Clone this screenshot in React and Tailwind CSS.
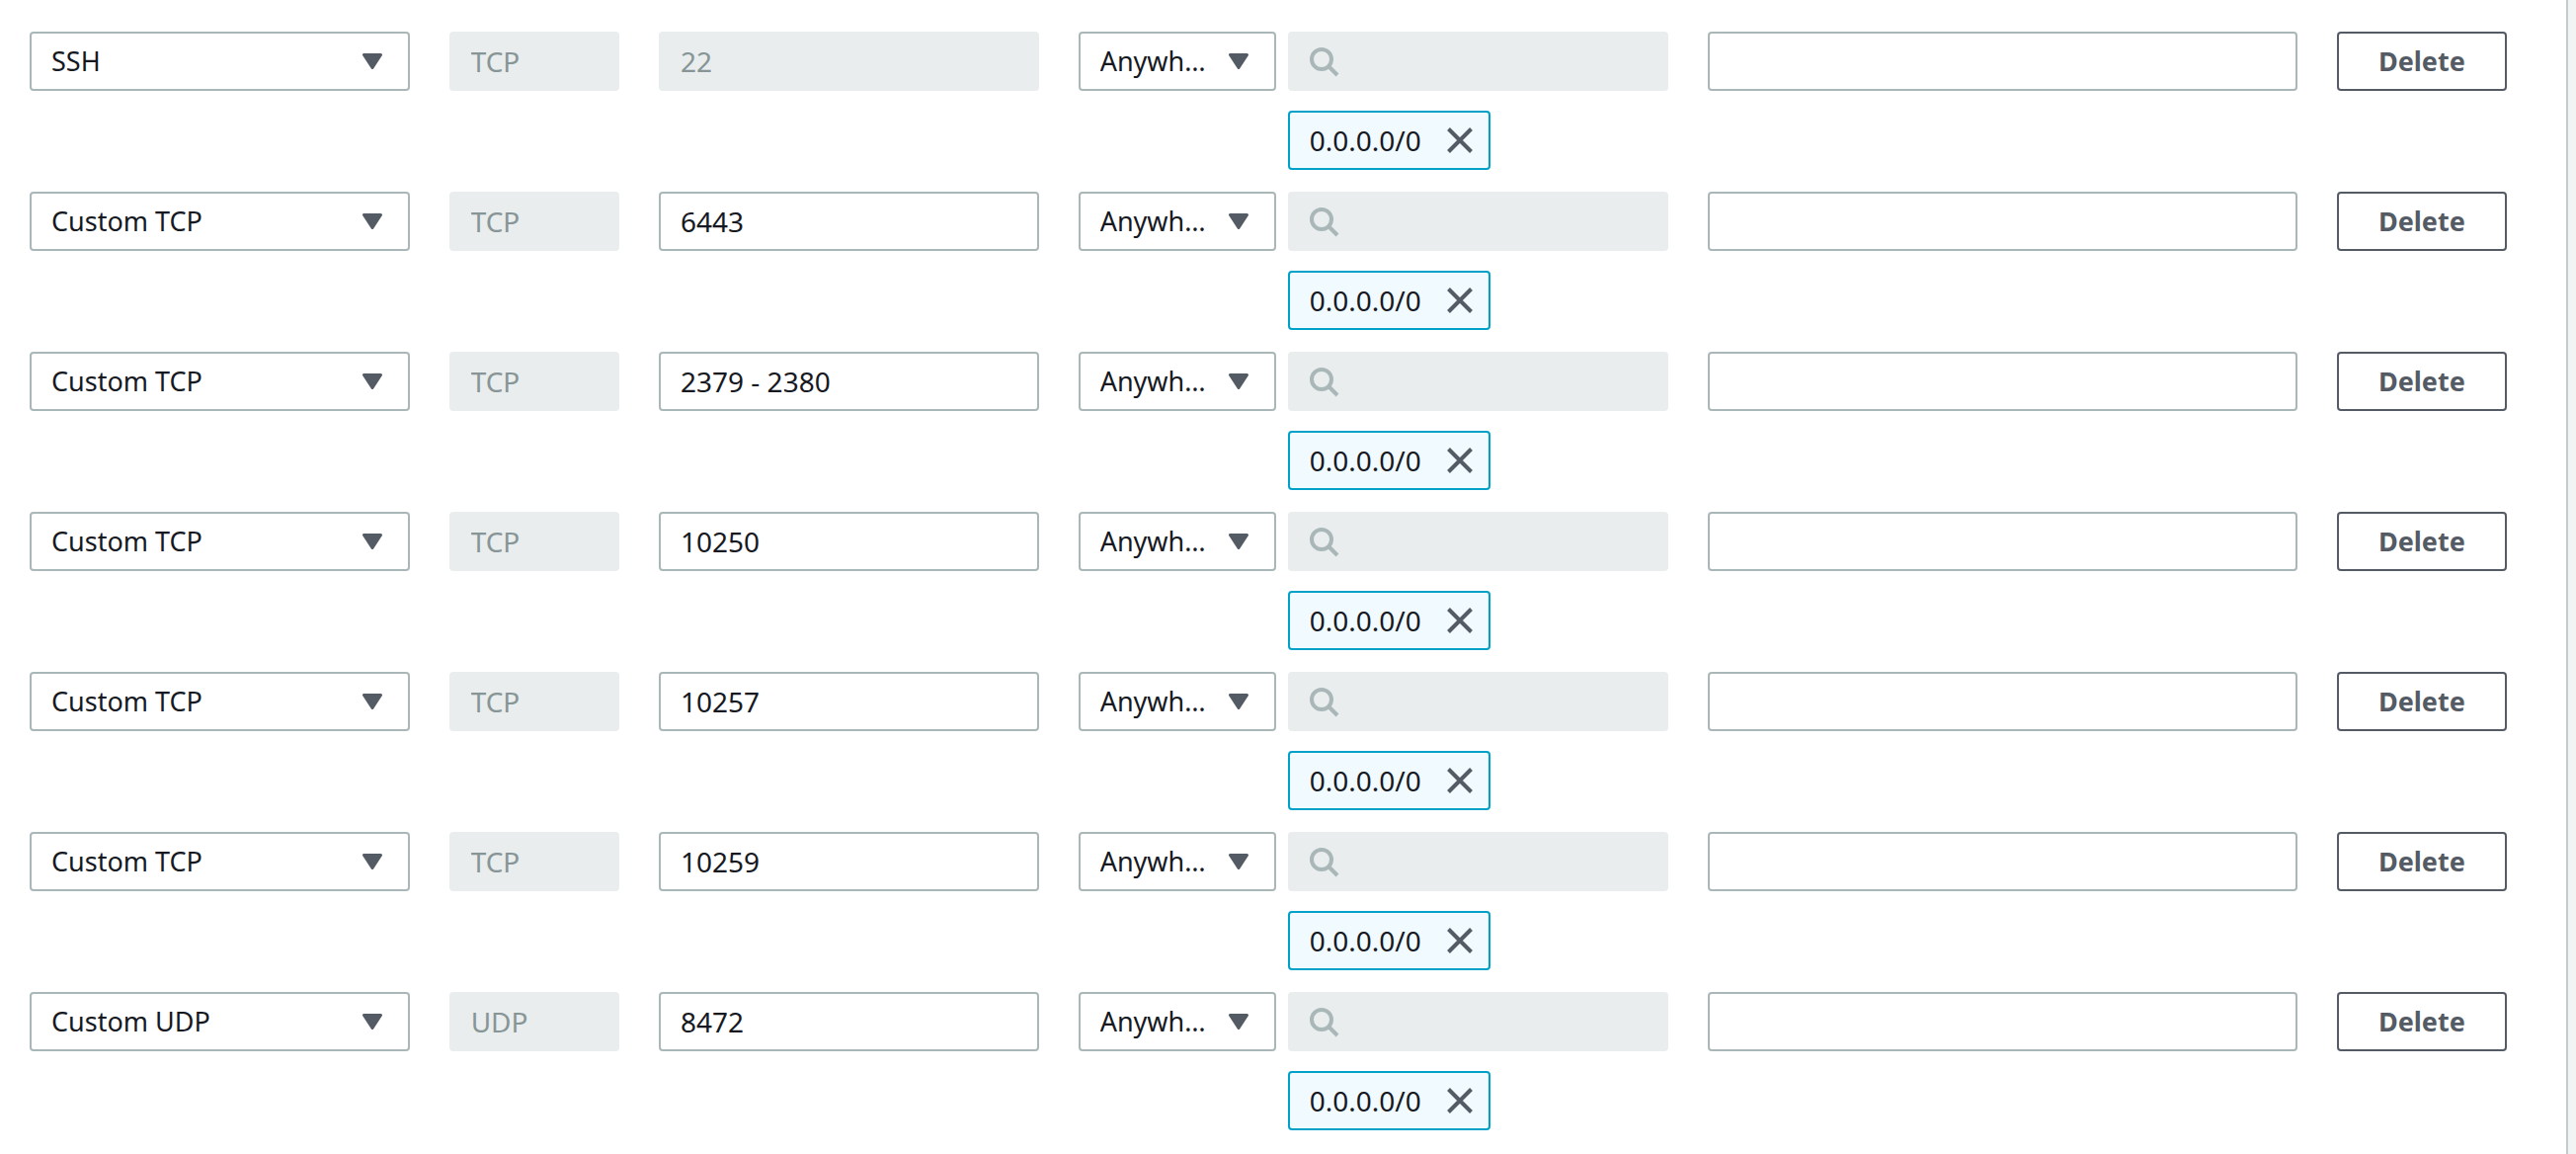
import React from "react";

const rules = [
  { type: "SSH", protocol: "TCP", port: "22", locked: true },
  { type: "Custom TCP", protocol: "TCP", port: "6443" },
  { type: "Custom TCP", protocol: "TCP", port: "2379 - 2380" },
  { type: "Custom TCP", protocol: "TCP", port: "10250" },
  { type: "Custom TCP", protocol: "TCP", port: "10257" },
  { type: "Custom TCP", protocol: "TCP", port: "10259" },
  { type: "Custom UDP", protocol: "UDP", port: "8472" },
];

const field =
  "block h-15 w-full min-w-0 rounded border-2 border-[#aab7b8] bg-white px-5 text-[28px] text-[#16191f] disabled:border-[#e9eded] disabled:bg-[#e9eded] disabled:text-[#879596]";

function Select({ label, value, options }) {
  return (
    <div className="relative min-w-0">
      <select
        aria-label={label}
        defaultValue={value}
        className="block h-15 w-full appearance-none truncate rounded border-2 border-[#aab7b8] bg-white pr-14 pl-5 text-[27px] text-[#16191f]"
      >
        {options.map((o) => (
          <option key={o}>{o}</option>
        ))}
      </select>
      <svg
        viewBox="0 0 20 16"
        aria-hidden="true"
        className="pointer-events-none absolute top-[22px] right-7 h-4 w-5 text-[#545b64]"
      >
        <path
          d="M1.5 1.5h17L10 14.5z"
          fill="currentColor"
          stroke="currentColor"
          strokeWidth="3"
          strokeLinejoin="round"
        />
      </svg>
    </div>
  );
}

function SearchIcon() {
  return (
    <svg
      viewBox="0 0 30 30"
      aria-hidden="true"
      className="pointer-events-none absolute top-4 left-[22px] size-[30px] text-[#aab7b8]"
      fill="none"
      stroke="currentColor"
      strokeWidth="4"
    >
      <circle cx="12" cy="12" r="10" />
      <path d="M19 19l9 9" />
    </svg>
  );
}

function Rule({ rule, index }) {
  const n = index + 1;
  return (
    <div className="grid grid-cols-12 items-start gap-x-10">
      <div className="col-span-2">
        <Select
          label={`Type, rule ${n}`}
          value={rule.type}
          options={["SSH", "Custom TCP", "Custom UDP"]}
        />
      </div>
      <input
        aria-label={`Protocol, rule ${n}`}
        className={field}
        defaultValue={rule.protocol}
        disabled
      />
      <div className="col-span-2">
        <input
          aria-label={`Port range, rule ${n}`}
          className={field}
          defaultValue={rule.port}
          disabled={rule.locked}
        />
      </div>
      <div className="col-span-3 grid grid-cols-[200fr_385fr] gap-x-3 gap-y-5">
        <Select
          label={`Source type, rule ${n}`}
          value="Anywhere"
          options={["Custom", "Anywhere", "My IP"]}
        />
        <div className="relative">
          <input aria-label={`Source, rule ${n}`} type="search" className={field} disabled />
          <SearchIcon />
        </div>
        <div className="col-start-2 flex h-15 items-center gap-[26px] justify-self-start rounded border-2 border-[#00a1c9] bg-[#f1faff] pr-4 pl-5 text-[28px] text-[#16191f]">
          <span>0.0.0.0/0</span>
          <button type="button" aria-label="Remove 0.0.0.0/0" className="text-[#545b64]">
            <svg
              viewBox="0 0 26 26"
              aria-hidden="true"
              className="size-[26px]"
              fill="none"
              stroke="currentColor"
              strokeWidth="4"
            >
              <path d="M1.5 1.5l23 23M24.5 1.5l-23 23" />
            </svg>
          </button>
        </div>
      </div>
      <input aria-label={`Description, rule ${n}`} className={`${field} col-span-3`} />
      <button
        type="button"
        className="h-15 rounded border-2 border-[#545b64] bg-white text-[27px] font-bold text-[#545b64]"
      >
        Delete
      </button>
    </div>
  );
}

export default function App() {
  return (
    <div className="min-h-screen bg-[#f2f3f3] pr-2 font-['Noto_Sans','Open_Sans',sans-serif]">
      <main className="flex min-h-screen flex-col gap-[22px] border-r-2 border-[#c3cbd0] bg-white pt-8 pr-[60px] pl-[30px]">
        {rules.map((rule, i) => (
          <Rule key={i} rule={rule} index={i} />
        ))}
      </main>
    </div>
  );
}
